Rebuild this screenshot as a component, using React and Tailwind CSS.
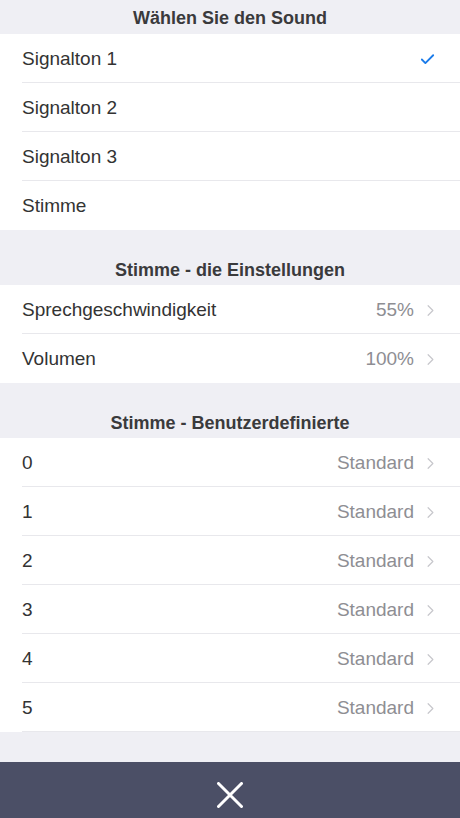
import { Check, ChevronRight } from "lucide-react";

const sounds = ["Signalton 1", "Signalton 2", "Signalton 3", "Stimme"];
const voiceSettings = [
  { label: "Sprechgeschwindigkeit", value: "55%" },
  { label: "Volumen", value: "100%" },
];
const custom = ["0", "1", "2", "3", "4", "5"];

function SectionHeader({ title, tall }) {
  return (
    <div
      className={`flex items-end justify-center bg-[#efeff4] text-[18px] font-bold text-[#3a3a3c] ${
        tall ? "h-[55px] pb-[1px]" : "h-[34px] pb-[2px]"
      }`}
    >
      {title}
    </div>
  );
}

function Chevron() {
  return (
    <ChevronRight className="ml-[7px] h-[19px] w-[19px] text-[#c7c7cc]" strokeWidth={1.5} />
  );
}

export default function App() {
  return (
    <div
      className="flex h-[818px] w-[460px] flex-col overflow-hidden bg-[#efeff4]"
      style={{ fontFamily: '"Liberation Sans", Arial, sans-serif' }}
    >
      <div className="flex-1">
        <SectionHeader title="Wählen Sie den Sound" />
        {sounds.map((s, i) => (
          <div key={s} className="bg-white pl-[22px]">
            <div
              className={`flex h-[49px] items-center pt-[2px] pr-[24px] ${
                i < sounds.length - 1 ? "border-b border-[#e8e8ec]" : ""
              }`}
            >
              <span className="flex-1 text-[19px] text-[#333]">{s}</span>
              {i === 0 && (
                <Check className="h-[17px] w-[17px] text-[#1a7bea]" strokeWidth={2.6} />
              )}
            </div>
          </div>
        ))}

        <SectionHeader title="Stimme - die Einstellungen" tall />
        {voiceSettings.map((r, i) => (
          <div key={r.label} className="bg-white pl-[22px]">
            <div
              className={`flex h-[49px] items-center pt-[2px] pr-[20px] ${
                i < voiceSettings.length - 1 ? "border-b border-[#e8e8ec]" : ""
              }`}
            >
              <span className="flex-1 text-[19px] text-[#333]">{r.label}</span>
              <span className="text-[19px] text-[#8e8e93]">{r.value}</span>
              <Chevron />
            </div>
          </div>
        ))}

        <SectionHeader title="Stimme - Benutzerdefinierte" tall />
        {custom.map((c) => (
          <div key={c} className="bg-white pl-[22px]">
            <div className="flex h-[49px] items-center border-b border-[#e8e8ec] pt-[2px] pr-[20px]">
              <span className="flex-1 text-[19px] text-[#333]">{c}</span>
              <span className="text-[19px] text-[#8e8e93]">Standard</span>
              <Chevron />
            </div>
          </div>
        ))}
      </div>

      <div className="flex h-[56px] justify-center bg-[#4b4f66] pt-[20px]">
        <svg width="26" height="26" viewBox="0 0 26 26" className="text-white">
          <path d="M1.5 1.5 L24.5 24.5 M24.5 1.5 L1.5 24.5" stroke="currentColor" strokeWidth="3" strokeLinecap="round" />
        </svg>
      </div>
    </div>
  );
}
